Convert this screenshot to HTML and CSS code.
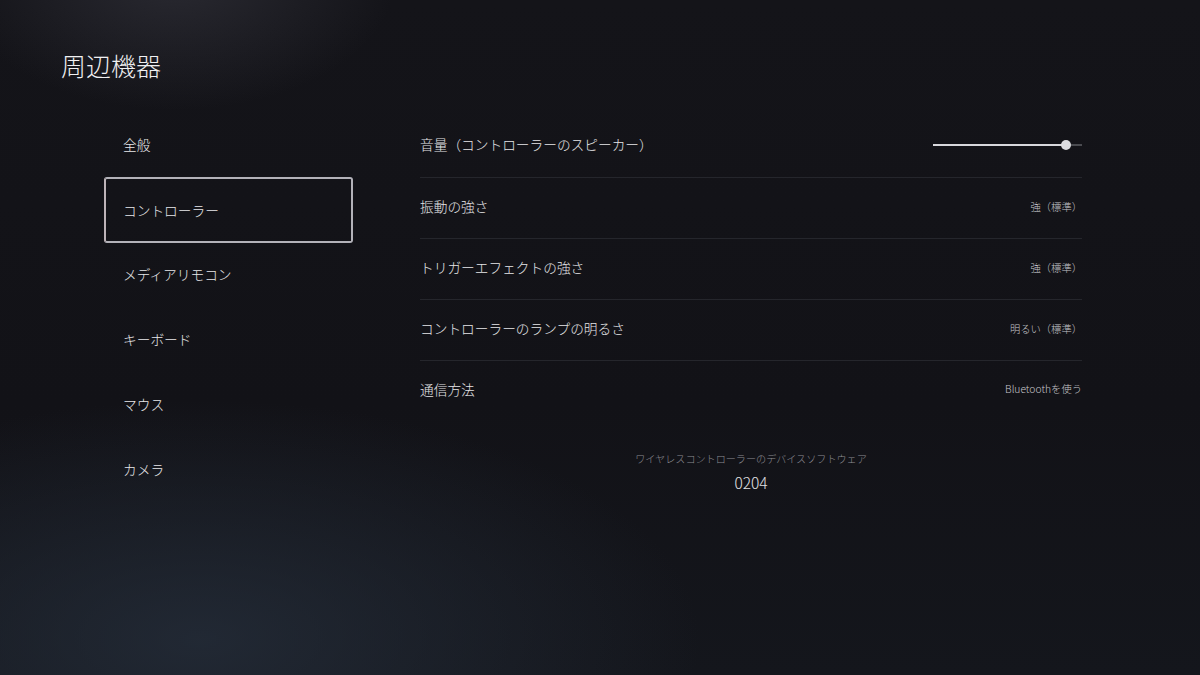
FILE: index.html
```html
<!DOCTYPE html>
<html lang="ja">
<head>
<meta charset="utf-8">
<title>周辺機器</title>
<link rel="stylesheet" href="styles.css">
</head>
<body>
<div class="screen">
  <h1 class="title">周辺機器</h1>
  <div class="main">
    <nav class="nav">
      <div class="nav-item">全般</div>
      <div class="nav-item selected">コントローラー</div>
      <div class="nav-item">メディアリモコン</div>
      <div class="nav-item">キーボード</div>
      <div class="nav-item">マウス</div>
      <div class="nav-item">カメラ</div>
    </nav>
    <section class="panel">
      <div class="row first">
        <span class="label">音量（コントローラーのスピーカー）</span>
        <div class="slider"><div class="fill" style="width:133px"></div><div class="knob"></div></div>
      </div>
      <div class="row">
        <span class="label">振動の強さ</span>
        <span class="value">強（標準）</span>
      </div>
      <div class="row">
        <span class="label">トリガーエフェクトの強さ</span>
        <span class="value">強（標準）</span>
      </div>
      <div class="row">
        <span class="label">コントローラーのランプの明るさ</span>
        <span class="value">明るい（標準）</span>
      </div>
      <div class="row last">
        <span class="label">通信方法</span>
        <span class="value">Bluetoothを使う</span>
      </div>
      <div class="firmware">
        <div class="fw-caption">ワイヤレスコントローラーのデバイスソフトウェア</div>
        <div class="fw-version">0204</div>
      </div>
    </section>
  </div>
</div>
</body>
</html>
```
FILE: styles.css
```css
html, body {
  margin: 0;
  padding: 0;
}
body {
  width: 1200px;
  height: 675px;
  overflow: hidden;
  font-family: "Noto Sans CJK JP", "Noto Sans", sans-serif;
  font-weight: 300;
  color: #e4e4e6;
  background-color: #121217;
  background-image:
    radial-gradient(ellipse 220px 130px at 175px -20px, rgba(62,62,72,0.5), rgba(62,62,72,0) 100%),
    radial-gradient(ellipse 500px 240px at 200px 640px, rgba(38,47,60,0.75), rgba(38,47,60,0) 100%),
    linear-gradient(180deg, #141419 0%, #121217 60%, #14161c 100%);
}
.screen {
  width: 1200px;
  height: 675px;
}
.title {
  margin: 0;
  padding: 50px 0 0 61px;
  font-size: 25px;
  line-height: 30px;
  font-weight: 300;
  color: #f0f0f2;
}
.main {
  display: flex;
  padding-top: 31px;
}
.nav {
  margin-left: 104px;
  width: 249px;
  display: flex;
  flex-direction: column;
}
.nav-item {
  height: 65px;
  box-sizing: border-box;
  border: 2px solid transparent;
  border-radius: 3px;
  padding-left: 17px;
  display: flex;
  align-items: center;
  font-size: 13.7px;
  color: #e8e8ea;
}
.nav-item.selected {
  height: 66px;
  margin-top: 1px;
  margin-bottom: -2px;
  padding-bottom: 1px;
  border-color: #b3b2b9;
  border-left-color: #bdb3b8;
}
.panel {
  margin-left: 67px;
  width: 662px;
  padding-top: 6px;
}
.row {
  height: 61px;
  box-sizing: border-box;
  border-bottom: 1px solid #25262c;
  padding-bottom: 4px;
  display: flex;
  align-items: center;
  justify-content: space-between;
}
.row.first {
  padding-bottom: 6px;
}
.row.last {
  border-bottom: none;
  padding-bottom: 6px;
}
.label {
  font-size: 13.7px;
  color: #e6e6e8;
}
.value {
  font-size: 10.3px;
  color: #c6c6ca;
}
.slider {
  position: relative;
  width: 149px;
  height: 2px;
  background: #4a4b50;
  margin-top: 2px;
}
.fill {
  height: 2px;
  background: #d8d8dc;
}
.knob {
  position: absolute;
  left: 128px;
  top: -4px;
  width: 10px;
  height: 10px;
  border-radius: 50%;
  background: #dcdce0;
}
.firmware {
  padding-top: 29px;
  text-align: center;
}
.fw-caption {
  font-size: 10.1px;
  line-height: 16px;
  color: #8f8f95;
}
.fw-version {
  margin-top: 6px;
  font-size: 15.5px;
  line-height: 18px;
  color: #e2e2e4;
}
```
